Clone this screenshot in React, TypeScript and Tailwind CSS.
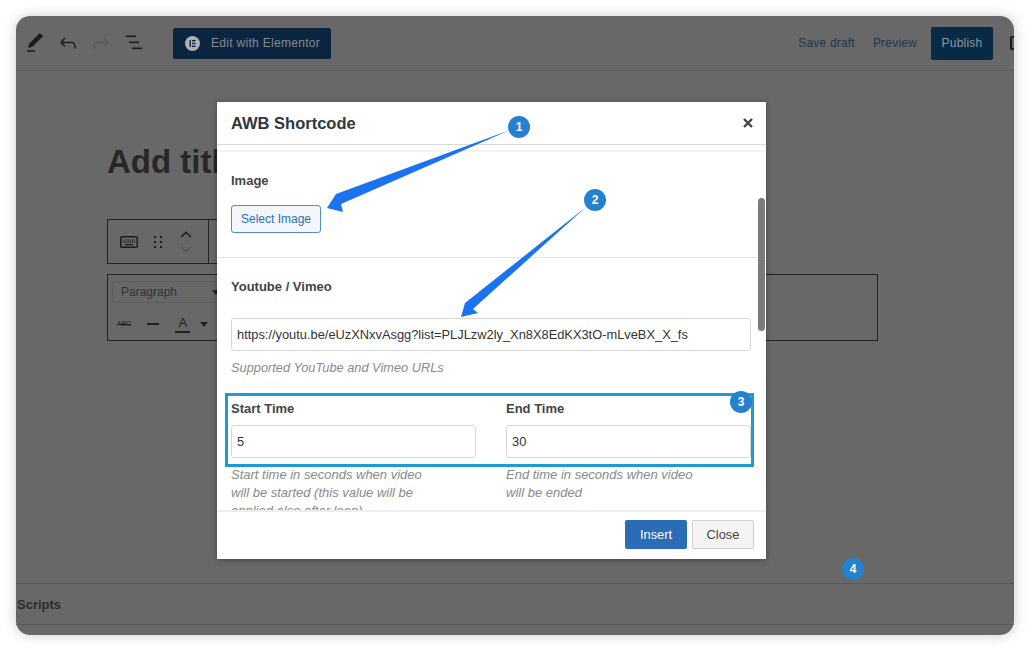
const sans = "font-['Liberation_Sans',Arial,sans-serif]";

const Badge = ({ n, className }: { n: number; className: string }) => (
    <div className={`absolute flex h-[22px] w-[22px] items-center justify-center rounded-full bg-[#2581d0] text-[12px] font-bold text-white ${className}`}>
        {n}
    </div>
);

const Topbar = () => (
    <div className="flex h-[55px] shrink-0 items-center justify-between border-b border-[#5c5c5c] pl-[7px]">
        <div className="flex items-center">
            <svg width="24" height="24" viewBox="0 0 24 24" fill="#1c1c1c">
                <path d="M20.1 5.1L16.9 2 6.2 12.7l-1.3 4.4 4.5-1.3L20.1 5.1zM4 20.8h8v-1.5H4v1.5z" />
            </svg>
            <svg width="24" height="24" viewBox="0 0 24 24" fill="#1c1c1c" className="ml-[9px]">
                <path d="M18.3 11.7c-.6-.6-1.4-.9-2.3-.9H6.7l2.9-3.3-1.1-1-4.5 5L8.5 16l1-1-2.7-2.7H16c.5 0 .9.2 1.3.5 1 1 1 3.4 1 4.5v.3h1.5v-.2c0-1.5 0-4.3-1.5-5.7z" />
            </svg>
            <svg width="24" height="24" viewBox="0 0 24 24" fill="#595959" className="ml-[9px]">
                <path d="M15.6 6.5l-1.1 1 2.9 3.3H8c-.9 0-1.7.3-2.3.9-1.4 1.5-1.4 4.2-1.4 5.6v.2h1.5v-.3c0-1.1 0-3.5 1-4.5.3-.3.7-.5 1.3-.5h9.2L14.5 15l1.1 1.1 4.6-4.6-4.6-5z" />
            </svg>
            <svg width="24" height="24" viewBox="0 0 24 24" fill="#1c1c1c" className="ml-[11px]">
                <rect x="2" y="4.5" width="10" height="1.6" />
                <rect x="5" y="10.5" width="10" height="1.6" />
                <rect x="8" y="16.5" width="10" height="1.6" />
            </svg>
            <div className="ml-[25px] flex h-[31px] w-[158px] items-center rounded-[2px] bg-[#0a2540] pl-[12px] text-[12px] tracking-[0.3px] text-[#858b92]">
                <svg width="15" height="15" viewBox="0 0 15 15">
                    <circle cx="7.5" cy="7.5" r="7.5" fill="#b0b0b0" />
                    <rect x="4.5" y="4" width="1.4" height="7" fill="#0a2540" />
                    <rect x="7" y="4" width="3.5" height="1.4" fill="#0a2540" />
                    <rect x="7" y="6.8" width="3.5" height="1.4" fill="#0a2540" />
                    <rect x="7" y="9.6" width="3.5" height="1.4" fill="#0a2540" />
                </svg>
                <span className="ml-[11px]">Edit with Elementor</span>
            </div>
        </div>
        <div className="flex items-center text-[12px] tracking-[0.2px] text-[#24364a]">
            <span className="mr-[18px]">Save draft</span>
            <span className="mr-[14px]">Preview</span>
            <div className="flex h-[33px] w-[62px] items-center justify-center rounded-[2px] bg-[#072a45] text-[#8d99a5]">
                Publish
            </div>
            <div className="ml-[17px] mr-[-6px] h-[14px] w-[10px] rounded-[2px] border-2 border-[#1c1c1c]"></div>
        </div>
    </div>
);

const EditorCanvas = () => (
    <div className="flex-1 pl-[91px]">
        <div className="mt-[71px] text-[33px] font-bold leading-[40px] text-[#272727]">Add title</div>
        <div className="mt-[37px] flex h-[45px] w-[300px] items-center border border-[#222] pl-[12px]">
            <svg width="18" height="12" viewBox="0 0 18 12" fill="none">
                <rect x="0.75" y="0.75" width="16.5" height="10.5" rx="1" stroke="#1c1c1c" strokeWidth="1.5" />
                <path d="M3 4h12M3 6.2h12" stroke="#1c1c1c" strokeWidth="1.2" strokeDasharray="1.4 .8" />
                <path d="M5 8.6h8" stroke="#1c1c1c" strokeWidth="1.2" />
            </svg>
            <svg width="8" height="14" viewBox="0 0 8 14" fill="#1c1c1c" className="ml-[16px]">
                <rect x="0" y="1" width="2" height="2" />
                <rect x="6" y="1" width="2" height="2" />
                <rect x="0" y="6" width="2" height="2" />
                <rect x="6" y="6" width="2" height="2" />
                <rect x="0" y="11" width="2" height="2" />
                <rect x="6" y="11" width="2" height="2" />
            </svg>
            <svg width="12" height="24" viewBox="0 0 12 24" fill="none" className="ml-[18px]">
                <path d="M1 7l5-4.5L11 7" stroke="#1c1c1c" strokeWidth="1.6" />
                <path d="M1 17l5 4.5 5-4.5" stroke="#555" strokeWidth="1.6" />
            </svg>
            <div className="ml-[16px] h-full w-[1px] bg-[#222]"></div>
        </div>
        <div className="mt-[10px] h-[67px] w-[771px] border border-[#222] pl-[4px] pt-[6px]">
            <div className="flex h-[22px] w-[300px] items-center border border-[#5c5c5c] pl-[8px] text-[12px] text-[#333]">
                Paragraph
                <span className="ml-[35px] h-0 w-0 border-x-[4px] border-t-[5px] border-x-transparent border-t-[#222]"></span>
            </div>
            <div className="mt-[12px] flex items-center pl-[5px]">
                <span className="text-[7px] leading-[12px] text-[#222] line-through">ABC</span>
                <span className="ml-[16px] h-[1.5px] w-[12px] bg-[#222]"></span>
                <span className="ml-[16px] border-b-2 border-[#222] px-[3px] text-[13px] leading-[16px] text-[#222]">A</span>
                <span className="ml-[10px] h-0 w-0 border-x-[4px] border-t-[5px] border-x-transparent border-t-[#222]"></span>
            </div>
        </div>
    </div>
);

const FieldLabel = ({ children }: { children: React.ReactNode }) => (
    <div className="text-[13px] font-bold leading-[20px] text-[#444]">{children}</div>
);

const TextField = ({ value }: { value: string }) => (
    <div className="flex h-[33px] items-center rounded-[3px] border border-[#d8d8d8] bg-white px-[5px] pt-[1px] text-[12.85px] text-[#333]">
        {value}
    </div>
);

const Help = ({ children, className = '' }: { children: React.ReactNode; className?: string }) => (
    <div className={`italic leading-[18px] text-[#8a8a8a] ${className}`}>{children}</div>
);

const Modal = () => (
    <div className="absolute left-[201px] top-[86px] flex h-[457px] w-[549px] flex-col bg-white shadow-[0_1px_6px_rgba(0,0,0,0.35)]">
        <div className="flex h-[43px] shrink-0 items-center justify-between border-b border-[#d9d9d9] px-[14px]">
            <span className="pt-[1px] text-[16.5px] font-bold text-[#2f3640]">AWB Shortcode</span>
            <svg width="10" height="10" viewBox="0 0 10 10" stroke="#444" strokeWidth="2.4" className="mr-[-1px]">
                <path d="M1 1l8 8M9 1L1 9" />
            </svg>
        </div>
        <div className="relative h-[365px] overflow-hidden">
            <div className="mt-[5px] border-t-2 border-[#f3f3f3]">
                <div className="border-b border-[#e6e6e6] pb-[24px] pl-[14px] pr-[15px] pt-[19px]">
                    <FieldLabel>Image</FieldLabel>
                    <div className="mt-[14px] flex h-[28px] w-[90px] items-center justify-center rounded-[3px] border border-[#4f8ecb] bg-[#f3f6fa] text-[12px] text-[#2a70b8]">
                        Select Image
                    </div>
                </div>
                <div className="pl-[14px] pr-[15px] pt-[19px]">
                    <FieldLabel>Youtube / Vimeo</FieldLabel>
                    <div className="mt-[21px]">
                        <TextField value="https://youtu.be/eUzXNxvAsgg?list=PLJLzw2ly_Xn8X8EdKX3tO-mLveBX_X_fs" />
                    </div>
                    <Help className="mt-[8px] text-[12.8px]">Supported YouTube and Vimeo URLs</Help>
                    <div className="mt-[22px] grid grid-cols-2 gap-[30px]">
                        <div>
                            <FieldLabel>Start Time</FieldLabel>
                            <div className="mt-[6px]">
                                <TextField value="5" />
                            </div>
                            <Help className="mt-[8px] max-w-[205px] text-[13px]">
                                Start time in seconds when video will be started (this value will be applied also after loop)
                            </Help>
                        </div>
                        <div>
                            <FieldLabel>End Time</FieldLabel>
                            <div className="mt-[6px]">
                                <TextField value="30" />
                            </div>
                            <Help className="mt-[8px] max-w-[195px] text-[13px]">End time in seconds when video will be ended</Help>
                        </div>
                    </div>
                </div>
            </div>
            <div className="absolute right-[1px] top-[53px] h-[133px] w-[7px] rounded-full bg-[#7b7b7b]"></div>
        </div>
        <div className="flex flex-1 items-center justify-end gap-[5px] border-t-2 border-[#eeeeee] pb-[2px] pr-[12px] text-[12.85px]">
            <div className="flex h-[29px] w-[62px] items-center justify-center rounded-[2px] bg-[#2a6cb5] text-white">Insert</div>
            <div className="flex h-[29px] w-[62px] items-center justify-center rounded-[2px] border border-[#cfcfcf] bg-[#f4f4f5] text-[#444]">
                Close
            </div>
        </div>
    </div>
);

export default function App() {
    return (
        <div className={`relative h-[652px] w-[1030px] overflow-hidden bg-white pl-[16px] pt-[16px] ${sans}`}>
            <div className="relative h-[619px] w-[998px] rounded-[14px] shadow-[0_0_14px_rgba(0,0,0,0.2)]">
                <div className="flex h-full w-full flex-col overflow-hidden rounded-[14px] bg-[#686868]">
                    <Topbar />
                    <EditorCanvas />
                    <div className="h-[42px] shrink-0 border-y border-[#5a5a5a] pl-[1px] text-[13px] font-bold leading-[42px] text-[#2c2c2c]">
                        Scripts
                    </div>
                    <div className="h-[10px] shrink-0"></div>
                </div>
                <Modal />
            </div>

            {/* annotations drawn over the screenshot */}
            <div className="absolute left-[225px] top-[393px] h-[74px] w-[529px] border-[3px] border-[#1f9bd3]"></div>
            <svg width="1030" height="652" viewBox="0 0 1030 652" fill="#1a73f0" className="pointer-events-none absolute left-0 top-0">
                <path d="M510 130L336 194L327 208L343 212L341 204Z" />
                <path d="M586 207L465 303L461 317L478 313L473 309Z" />
            </svg>
            <Badge n={1} className="left-[508px] top-[116px]" />
            <Badge n={2} className="left-[584px] top-[189px]" />
            <Badge n={3} className="left-[730px] top-[391px]" />
            <Badge n={4} className="left-[842px] top-[558px]" />
        </div>
    );
}
